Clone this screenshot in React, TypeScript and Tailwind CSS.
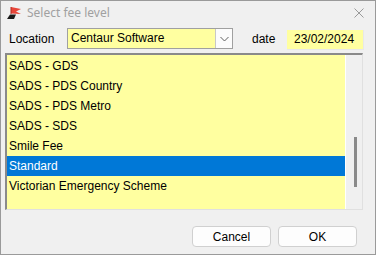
import React from "react";

const items = [
  "SADS - GDS",
  "SADS - PDS Country",
  "SADS - PDS Metro",
  "SADS - SDS",
  "Smile Fee",
  "Standard",
  "Victorian Emergency Scheme",
];

export default function App() {
  return (
    <div
      className="w-[376px] h-[255px] bg-[#f0f0f0] border border-[#9a9a9a] flex flex-col text-[12px] text-black overflow-hidden"
      style={{ fontFamily: '"Liberation Sans", Arial, sans-serif' }}
    >
      {/* Title bar */}
      <div className="h-[23px] flex items-center pl-[5px] pr-[8px] shrink-0">
        <svg width="16" height="14" viewBox="0 0 16 14" className="mr-[5px]">
          <path d="M5 1 L15 3 L10 5.5 L15 8 L5 7.5 Z" fill="#e8463a" />
          <path d="M5 1 L5 8" stroke="#b02a20" strokeWidth="1" />
          <path d="M1 13 L4 8.5 L10 8.5 L8 13 Z" fill="#1a1a1a" />
        </svg>
        <span
          className="text-[#a0a0a0] text-[12px]"
          style={{ fontFamily: '"Noto Sans", "Open Sans", sans-serif' }}
        >
          Select fee level
        </span>
        <div className="flex-1" />
        <svg width="10" height="10" viewBox="0 0 10 10" className="mr-[3px]">
          <path d="M0.5 0.5 L9.5 9.5 M9.5 0.5 L0.5 9.5" stroke="#9a9a9a" strokeWidth="1" />
        </svg>
      </div>

      {/* Location / date row */}
      <div className="h-[28px] flex items-center shrink-0 pt-[1px]">
        <span className="ml-[8px] w-[58px]">Location</span>
        <div className="w-[166px] h-[21px] border border-[#a0a0a0] bg-[#ffffa0] flex items-stretch">
          <span className="flex-1 pl-[3px] leading-[19px]">Centaur Software</span>
          <div className="w-[17px] bg-[#fcfcfc] border-l border-[#c8c8c8] flex items-center justify-center">
            <svg width="9" height="6" viewBox="0 0 9 6">
              <path d="M0.5 1 L4.5 5 L8.5 1" stroke="#606060" strokeWidth="1" fill="none" />
            </svg>
          </div>
        </div>
        <span className="ml-[19px] w-[35px]">date</span>
        <div className="w-[77px] h-[20px] bg-[#ffffa0] border-b border-r border-[#e8e8e8] flex items-center pl-[7px] mt-[2px]">
          23/02/2024
        </div>
      </div>

      {/* List box */}
      <div className="mx-[4px] mt-[1px] h-[157px] w-[358px] border-t-2 border-l-2 border-t-[#8a8a8a] border-l-[#8a8a8a] border-b border-r border-b-[#e0e0e0] border-r-[#e0e0e0] flex">
        <div className="flex-1 bg-[#ffffa0] pt-[1px] border-r border-white">
          {items.map((it) => (
            <div
              key={it}
              className={
                "h-[20px] pl-[2px] leading-[20px] " +
                (it === "Standard" ? "bg-[#0078d7] text-white" : "")
              }
            >
              {it}
            </div>
          ))}
        </div>
        <div className="w-[16px] bg-[#f0f0f0] flex justify-center">
          <div className="w-[3px] h-[50px] bg-[#8a8a8a] mt-[82px] ml-[2px]" />
        </div>
      </div>

      {/* Buttons */}
      <div className="flex justify-end gap-[7px] mt-[16px] pr-[18px]">
        <button className="w-[79px] h-[21px] bg-[#fdfdfd] border border-[#d0d0d0] rounded-[4px] text-[12px]">
          Cancel
        </button>
        <button className="w-[79px] h-[21px] bg-[#fdfdfd] border border-[#d0d0d0] rounded-[4px] text-[12px]">
          OK
        </button>
      </div>
    </div>
  );
}
